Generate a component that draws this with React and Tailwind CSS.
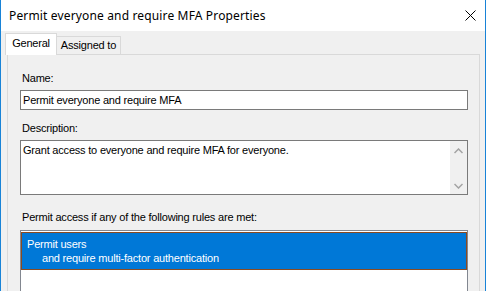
import React from "react";

const font = { fontFamily: '"Liberation Sans", Arial, sans-serif' };

export default function App() {
  return (
    <div
      className="w-[486px] h-[291px] overflow-hidden border-x border-[#1883d7] bg-[#f0f0f0] flex flex-col text-[11px] tracking-[-0.2px] text-black"
      style={font}
    >
      {/* title bar */}
      <div className="h-[31px] shrink-0 bg-white flex items-center justify-between pl-[8px] pr-[9px]">
        <span
          className="text-[12px] leading-none tracking-[0.15px]"
          style={{ fontFamily: '"Noto Sans", "Liberation Sans", sans-serif' }}
        >
          Permit everyone and require MFA Properties
        </span>
        <svg width="11" height="11" viewBox="0 0 11 11" className="mb-[1px]">
          <path d="M0.5 0.5L10.5 10.5M10.5 0.5L0.5 10.5" stroke="#000" strokeWidth="1" />
        </svg>
      </div>

      {/* tabs */}
      <div className="flex items-end pl-[4px] h-[23px] shrink-0 relative z-10">
        <div className="h-[22px] w-[52px] bg-white border border-b-0 border-[#d9d9d9] flex items-center justify-center -mb-px pb-[2px]">
          General
        </div>
        <div className="h-[18px] w-[64px] border border-l-0 border-b-0 border-[#d9d9d9] flex items-center justify-center">
          Assigned to
        </div>
      </div>

      {/* panel */}
      <div className="ml-[6px] mr-[5px] flex-1 border border-b-0 border-[#d9d9d9] bg-[#f0f0f0] pl-[12px] pr-[11px] pt-[17px]">
        <div className="pl-[2px] leading-[13px]">Name:</div>
        <div className="mt-[5px] h-[20px] border border-[#7a7a7a] bg-white flex items-center px-[2px]">
          Permit everyone and require MFA
        </div>

        <div className="mt-[12px] pl-[2px] leading-[13px]">Description:</div>
        <div className="mt-[5px] h-[55px] border border-[#7a7a7a] bg-white flex">
          <div className="flex-1 px-[2px] pt-[3px] leading-[13px]">
            Grant access to everyone and require MFA for everyone.
          </div>
          <div className="w-[17px] bg-[#f0f0f0] flex flex-col items-center justify-between pt-[7px] pb-[5px]">
            <svg width="9" height="6" viewBox="0 0 9 6">
              <path d="M0.5 5L4.5 1L8.5 5" fill="none" stroke="#a3a3a3" strokeWidth="1.5" />
            </svg>
            <svg width="9" height="6" viewBox="0 0 9 6">
              <path d="M0.5 1L4.5 5L8.5 1" fill="none" stroke="#a3a3a3" strokeWidth="1.5" />
            </svg>
          </div>
        </div>

        <div className="mt-[16px] pl-[2px] leading-[13px]">
          Permit access if any of the following rules are met:
        </div>
        <div className="mt-[6px] h-[80px] border border-[#828790] bg-white pt-px">
          <div className="h-[38px] bg-[#0078d7] border border-[#8a4b22] text-white pl-[5px] pt-[4px] leading-[14px]">
            <div>Permit users</div>
            <div className="pl-[15px]">and require multi-factor authentication</div>
          </div>
        </div>
      </div>
    </div>
  );
}
